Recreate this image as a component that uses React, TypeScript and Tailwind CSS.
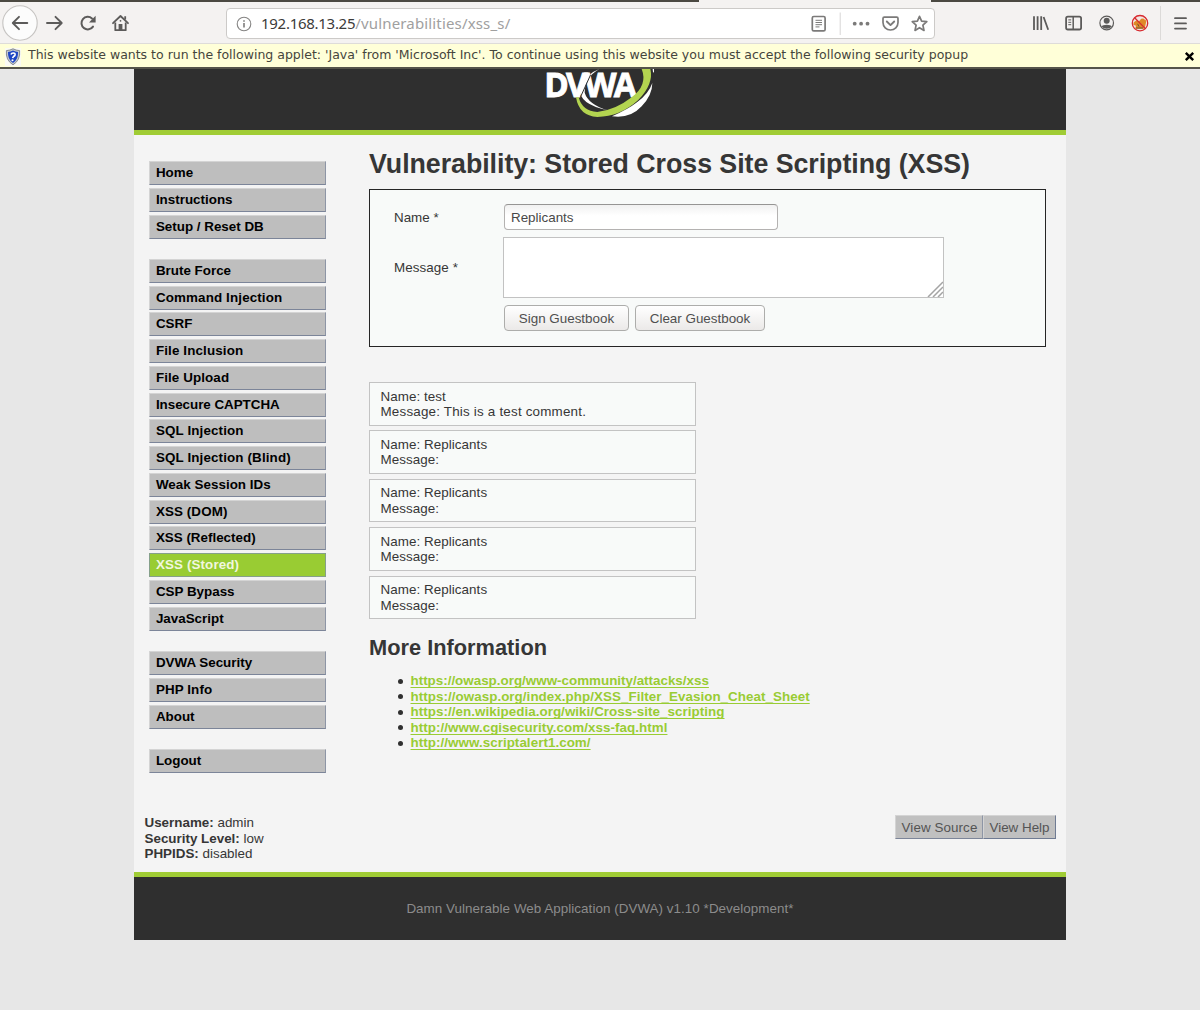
import React from 'react';

const menuGroups: { label: string; tracking: string; active?: boolean }[][] = [
  [
    { label: 'Home', tracking: 'tracking-[0.04px]' },
    { label: 'Instructions', tracking: 'tracking-[0px]' },
    { label: 'Setup / Reset DB', tracking: 'tracking-[0px]' },
  ],
  [
    { label: 'Brute Force', tracking: 'tracking-[0px]' },
    { label: 'Command Injection', tracking: 'tracking-[0.13px]' },
    { label: 'CSRF', tracking: 'tracking-[0px]' },
    { label: 'File Inclusion', tracking: 'tracking-[0.13px]' },
    { label: 'File Upload', tracking: 'tracking-[0.1px]' },
    { label: 'Insecure CAPTCHA', tracking: 'tracking-[-0.03px]' },
    { label: 'SQL Injection', tracking: 'tracking-[0.13px]' },
    { label: 'SQL Injection (Blind)', tracking: 'tracking-[0.13px]' },
    { label: 'Weak Session IDs', tracking: 'tracking-[0.03px]' },
    { label: 'XSS (DOM)', tracking: 'tracking-[0.1px]' },
    { label: 'XSS (Reflected)', tracking: 'tracking-[0px]' },
    { label: 'XSS (Stored)', tracking: 'tracking-[0.12px]', active: true },
    { label: 'CSP Bypass', tracking: 'tracking-[0px]' },
    { label: 'JavaScript', tracking: 'tracking-[0px]' },
  ],
  [
    { label: 'DVWA Security', tracking: 'tracking-[0px]' },
    { label: 'PHP Info', tracking: 'tracking-[0.1px]' },
    { label: 'About', tracking: 'tracking-[0px]' },
  ],
  [{ label: 'Logout', tracking: 'tracking-[0px]' }],
];

const comments = [
  { name: 'test', message: 'This is a test comment.' },
  { name: 'Replicants', message: '' },
  { name: 'Replicants', message: '' },
  { name: 'Replicants', message: '' },
  { name: 'Replicants', message: '' },
];

const links = [
  'https://owasp.org/www-community/attacks/xss',
  'https://owasp.org/index.php/XSS_Filter_Evasion_Cheat_Sheet',
  'https://en.wikipedia.org/wiki/Cross-site_scripting',
  'http://www.cgisecurity.com/xss-faq.html',
  'http://www.scriptalert1.com/',
];

function NavIcons() {
  return (
    <svg className="block shrink-0" width="140" height="42" viewBox="0 2 140 42" fill="none">
      <circle cx="20" cy="23" r="17.2" fill="#fcfcfc" stroke="#c6c4c2" strokeWidth="1.1" />
      <g stroke="#5c5b5a" strokeWidth="1.9" strokeLinecap="round" strokeLinejoin="round">
        <path d="M27.3 23H13M19 16.8L12.8 23L19 29.2" />
        <path d="M47 23H61.5M55.5 16.8L61.7 23L55.5 29.2" />
        <path d="M93 26.6A6.3 6.3 0 1 1 92 18.4" strokeWidth="2" />
      </g>
      <path d="M95.6 15.8V22.4H89Z" fill="#5c5b5a" />
      <path d="M113 23.2L120.5 16L128 23.2" stroke="#5c5b5a" strokeWidth="1.8" strokeLinecap="round" strokeLinejoin="round" />
      <path d="M115.3 22.5V30.2H125.7V22.5M125.2 16.2V19.5" stroke="#5c5b5a" strokeWidth="1.8" strokeLinejoin="round" />
      <path d="M118.6 30.2V24H122.4V30.2Z" fill="#5c5b5a" />
      <circle cx="120.5" cy="20.8" r="0.9" fill="#5c5b5a" />
    </svg>
  );
}

function UrlIcons() {
  return (
    <svg className="block shrink-0" width="125" height="30" viewBox="807 8.5 125 30" fill="none">
      <g stroke="#7b7a79" strokeWidth="1.7" strokeLinejoin="round">
        <rect x="812.3" y="16" width="12.8" height="14.4" rx="1.5" />
        <path d="M815.5 19.8H822M815.5 22H822M815.5 24.2H822M815.5 26.4H819.5" strokeWidth="1" />
        <path d="M884.3 16.6H896.7Q898 16.6 898 18V22A7.5 7.5 0 0 1 883 22V18Q883 16.6 884.3 16.6Z" />
        <path d="M886.8 21L890.5 24.6L894.2 21" strokeWidth="1.9" strokeLinecap="round" />
        <path d="M919.5 15.9L921.6 20.7L926.8 21.2L922.9 24.7L924 29.9L919.5 27.2L915 29.9L916.1 24.7L912.2 21.2L917.4 20.7Z" />
      </g>
      <path d="M840.2 12V34.5" stroke="#d7d6d5" />
      <g fill="#7b7a79">
        <circle cx="854.7" cy="23.2" r="1.9" />
        <circle cx="861.1" cy="23.2" r="1.9" />
        <circle cx="867.5" cy="23.2" r="1.9" />
      </g>
    </svg>
  );
}

function ToolbarIcons() {
  return (
    <svg className="block shrink-0" width="180" height="42" viewBox="1020 2 180 42" fill="none">
      <g stroke="#5c5b5a" strokeWidth="1.8">
        <path d="M1034 16.3V30M1037.6 16.3V30M1041.2 16.3V30M1043.6 17L1048.2 29.8" />
        <rect x="1066.1" y="16.7" width="15" height="12.8" rx="1.8" />
        <path d="M1073.2 16.7V29.5" strokeWidth="1.5" />
        <path d="M1068.3 19.9H1071.2M1068.3 22.3H1071.2M1068.3 24.7H1071.2" strokeWidth="1" />
        <circle cx="1106.7" cy="23" r="6.8" strokeWidth="1.2" />
      </g>
      <circle cx="1106.7" cy="20.7" r="3" fill="#5c5b5a" />
      <path d="M1101.6 26.5Q1102.5 24.7 1106.7 24.7T1111.8 26.5Q1110 28.8 1106.7 28.8T1101.6 26.5Z" fill="#5c5b5a" />
      <circle cx="1140" cy="23.2" r="7.7" fill="#f3e6e2" />
      <path d="M1133.6 22.4L1136.5 20.2L1139 21.2L1141.2 18.8L1143.2 18.4L1146.4 20.7L1145.6 24.5L1144.6 28.7H1135.2L1136 25.8L1133.4 24.8Z" fill="#df8a28" />
      <path d="M1137.6 23.8L1139 26.6M1136 28H1143" stroke="#75502e" strokeWidth="1" />
      <circle cx="1140" cy="23.2" r="7.7" stroke="#d72b30" strokeWidth="1.3" />
      <path d="M1134.6 17.8L1145.4 28.6" stroke="#d72b30" strokeWidth="1.3" />
      <path d="M1160.5 6V40" stroke="#dcdad8" />
      <path d="M1175 18.2H1186M1175 23.4H1186M1175 28.6H1186" stroke="#5c5b5a" strokeWidth="1.8" strokeLinecap="round" />
    </svg>
  );
}

function BrowserBar() {
  return (
    <header className="h-[44px] bg-[#f4f2f1] border-b border-[#dedcd9] flex flex-col">
      <div className="flex h-[2px] shrink-0 justify-between">
        <div className="w-[699px] bg-[#4b4942]" />
        <div className="w-[269px] bg-[#4b4942]" />
      </div>
      <div className="flex h-[41px] items-start">
        <NavIcons />
        <div className="ml-[86px] mt-[6px] flex h-[31px] w-[709px] items-center rounded-[4px] border border-[#cccac8] bg-white">
          <svg className="ml-[9px] block shrink-0" width="16" height="16" viewBox="0 0 16 16" fill="none">
            <circle cx="8" cy="8" r="6.8" stroke="#858483" strokeWidth="1.1" />
            <path d="M8 7V11.6M8 4.2V5.8" stroke="#858483" strokeWidth="1.7" />
          </svg>
          <div className="-mt-[1px] ml-[9px] w-[546px] whitespace-nowrap font-['Noto_Sans',sans-serif] text-[15px] leading-[20px] text-[#a0a09f]">
            <span className="tracking-[-0.28px] text-[#3c3b3a]">192.168.13.25</span>
            <span className="tracking-[0.16px]">/vulnerabilities/xss_s/</span>
          </div>
          <UrlIcons />
        </div>
        <div className="ml-auto">
          <ToolbarIcons />
        </div>
      </div>
    </header>
  );
}

function AppletBar() {
  return (
    <div className="flex h-[25px] items-start border-b-[2px] border-[#55544a] bg-[#ffffd8] font-['DejaVu_Sans',sans-serif]">
      <svg className="ml-[5px] mt-[4px] block shrink-0" width="16" height="18" viewBox="0 0 16 18">
        <rect width="16" height="18" fill="#fafaf4" />
        <path d="M8 .8Q11 2.4 14.6 2.6Q15.6 12.2 8 16.8Q.4 12.2 1.4 2.6Q5 2.4 8 .8Z" fill="#c3c8cf" stroke="#70767d" strokeWidth=".8" />
        <path d="M8 2.6Q10.4 3.8 13 4Q13.5 11.4 8 15Q2.5 11.4 3 4Q5.6 3.8 8 2.6Z" fill="#1d45c4" />
        <path d="M6 6.6Q6.5 4.9 8.4 5Q10.4 5.2 10 7Q9.7 8 8.5 8.6Q7.8 9.1 7.7 10.2" fill="none" stroke="#fff" strokeWidth="1.7" />
        <circle cx="7.5" cy="12.3" r="1.05" fill="#fff" />
      </svg>
      <span className="ml-[7px] mt-[3px] whitespace-nowrap text-[12.5px] leading-[16px] text-[#45453c]">
        This website wants to run the following applet: 'Java' from 'Microsoft Inc'. To continue using this website you must accept the following security popup
      </span>
      <svg className="ml-auto mr-[5px] mt-[7px] block shrink-0" width="11" height="11" viewBox="0 0 11 11">
        <path d="M1.8 1.8L9.2 9.2M9.2 1.8L1.8 9.2" stroke="#000" strokeWidth="2.4" />
      </svg>
    </div>
  );
}

function Logo() {
  return (
    <svg className="block overflow-visible" width="160" height="61" viewBox="0 27 480 183">
      <path d="M238 27Q196 42 181 86Q174 132 265 151Q205 134 194 98Q194 52 238 27Z" fill="#fff" />
      <text x="73" y="112" textLength="268" lengthAdjust="spacingAndGlyphs" fill="#fff" stroke="#fff" strokeWidth="2.5" className="font-['Open_Sans',sans-serif] text-[102px] font-bold tracking-[-9px]">
        DVWA
      </text>
      <path d="M182 110L212 44" stroke="#2f2f2f" strokeWidth="3" />
      <path d="M365 27H391Q402 72 354 121Q300 170 232 171Q177 168 168 112H176Q187 154 232 156Q285 151 335 112Q384 75 365 27Z" fill="#b3d450" />
      <path d="M398 27L402 27L402 38L399 36Z" fill="#fff" />
      <path d="M397 69Q386 101 351 127Q324 148 276 169Q330 177 365 139Q397 105 397 69Z" fill="#fff" />
    </svg>
  );
}

function Sidebar() {
  return (
    <nav className="flex w-[176.5px] shrink-0 flex-col gap-[20.4px]">
      {menuGroups.map((group, g) => (
        <ul key={g} className="flex flex-col gap-[2.75px]">
          {group.map((item) => (
            <li
              key={item.label}
              className={
                item.active
                  ? 'flex h-[24px] items-center border border-[#86a08a] bg-[#99cc33] pl-[5.5px] text-[#f0f7df]'
                  : 'flex h-[24px] items-center border border-t-[#d4d4d4] border-r-[#8d95a5] border-b-[#7c8599] border-l-[#d4d4d4] bg-[#bebebe] pl-[5.5px] text-black'
              }
            >
              <span className={`${item.tracking} whitespace-nowrap font-bold leading-[16px]`}>{item.label}</span>
            </li>
          ))}
        </ul>
      ))}
    </nav>
  );
}

function GuestbookForm() {
  const button =
    'h-[26px] rounded-[4px] border border-[#adadab] bg-linear-to-b from-white to-[#ebe9e8] text-center text-[13.4px] leading-[23px] text-[#4f4f4f]';
  return (
    <form className="mt-[6px] h-[157.5px] w-[677px] border border-[#252525] bg-[#f8faf9] pl-[24px] pt-[14px]" onSubmit={(e) => e.preventDefault()}>
      <div className="flex h-[33px] items-start">
        <label className="w-[110px] pt-[6px] leading-[16px]">Name *</label>
        <input
          readOnly
          value="Replicants"
          className="block h-[26px] w-[273.5px] rounded-[4px] border border-[#b4b2b1] border-t-[#969594] bg-linear-to-b from-[#f1f1f1] to-white to-45% px-[6px] text-[13.4px] text-[#484848] outline-none"
        />
      </div>
      <div className="flex h-[68px] items-start">
        <label className="w-[108.5px] pt-[23px] leading-[16px] tracking-[0.08px]">Message *</label>
        <div className="flex h-[61px] w-[441.5px] items-end justify-end border border-[#c2c2c2] bg-white">
          <svg className="block" width="16" height="16" viewBox="0 0 16 16" stroke="#a4a4a4" strokeWidth="1.5">
            <path d="M1 16L16 1M6 16L16 6M11 16L16 11" />
          </svg>
        </div>
      </div>
      <div className="flex gap-[6px] pl-[110px]">
        <button className={`${button} w-[125px]`}>Sign Guestbook</button>
        <button className={`${button} w-[130px]`}>Clear Guestbook</button>
      </div>
    </form>
  );
}

function MainContent() {
  return (
    <main className="flex w-[677px] flex-col">
      <h1 className="whitespace-nowrap pt-[11px] text-[26.8px] font-bold leading-[36px] tracking-[-0.055px]">
        Vulnerability: Stored Cross Site Scripting (XSS)
      </h1>
      <div className="pt-[1px]">
        <GuestbookForm />
      </div>
      <section className="mt-[35.5px] flex flex-col gap-[4.9px]">
        {comments.map((c, i) => (
          <div key={i} className="h-[43.5px] w-[326.5px] border border-[#c3c3c3] bg-[#f8faf9] pl-[10.5px] pt-[5.5px] leading-[15.5px] tracking-[0.06px]">
            <p>Name: {c.name}</p>
            <p className={c.message ? 'tracking-[0.2px]' : ''}>Message: {c.message}</p>
          </div>
        ))}
      </section>
      <h2 className="mt-[16px] text-[21.8px] font-bold leading-[26px]">More Information</h2>
      <ul className="mt-[12.4px] pl-[29px]">
        {links.map((l, i) => (
          <li key={l} className="flex h-[15.5px] items-center leading-[15.5px]">
            <span className="mr-[7.5px] size-[5px] shrink-0 rounded-full bg-[#303030]" />
            <a
              className={`${i === 0 ? 'tracking-[0px]' : 'tracking-[0.045px]'} font-bold text-[#99cc33] underline underline-offset-[2px] [text-decoration-skip-ink:none]`}
            >
              {l}
            </a>
          </li>
        ))}
      </ul>
    </main>
  );
}

export default function App() {
  return (
    <div className="h-[1010px] w-[1200px] overflow-hidden bg-[#e7e7e7] font-['Liberation_Sans',Arial,sans-serif] text-[13.4px] text-[#363636]">
      <BrowserBar />
      <AppletBar />
      <div className="mx-auto flex w-[932px] flex-col bg-[#f4f4f4]">
        <div className="flex h-[66px] justify-center border-b-[5px] border-[#a0cc35] bg-[#2f2f2f]">
          <Logo />
        </div>
        <div className="flex h-[675px]">
          <div className="w-[235px] shrink-0 pl-[15.4px] pt-[26px]">
            <Sidebar />
          </div>
          <MainContent />
        </div>
        <div className="flex h-[62px] items-start justify-between pl-[10.5px] pr-[10px]">
          <div className="pt-[5.4px] leading-[15.5px]">
            <p><b>Username:</b> admin</p>
            <p><b>Security Level:</b> low</p>
            <p><b>PHPIDS:</b> disabled</p>
          </div>
          <div className="mt-[5px] flex text-[#545454]">
            <button className="h-[24px] w-[88px] border border-t-[#d4d4d4] border-r-[#8d95a5] border-b-[#7c8599] border-l-[#d4d4d4] bg-[#c0c0c0] pl-[1px] pt-[1px] leading-[22px] tracking-[0.08px]">View Source</button>
            <button className="h-[24px] w-[73px] border border-t-[#d4d4d4] border-r-[#6f7b93] border-b-[#6f7b93] border-l-[#d4d4d4] bg-[#c0c0c0] pt-[1px] leading-[22px]">View Help</button>
          </div>
        </div>
        <footer className="flex h-[68px] items-start justify-center border-t-[5px] border-[#a0cc35] bg-[#2f2f2f] pt-[24px] leading-[16px] tracking-[0.05px] text-[#8c8c8c]">
          Damn Vulnerable Web Application (DVWA) v1.10 *Development*
        </footer>
      </div>
    </div>
  );
}
